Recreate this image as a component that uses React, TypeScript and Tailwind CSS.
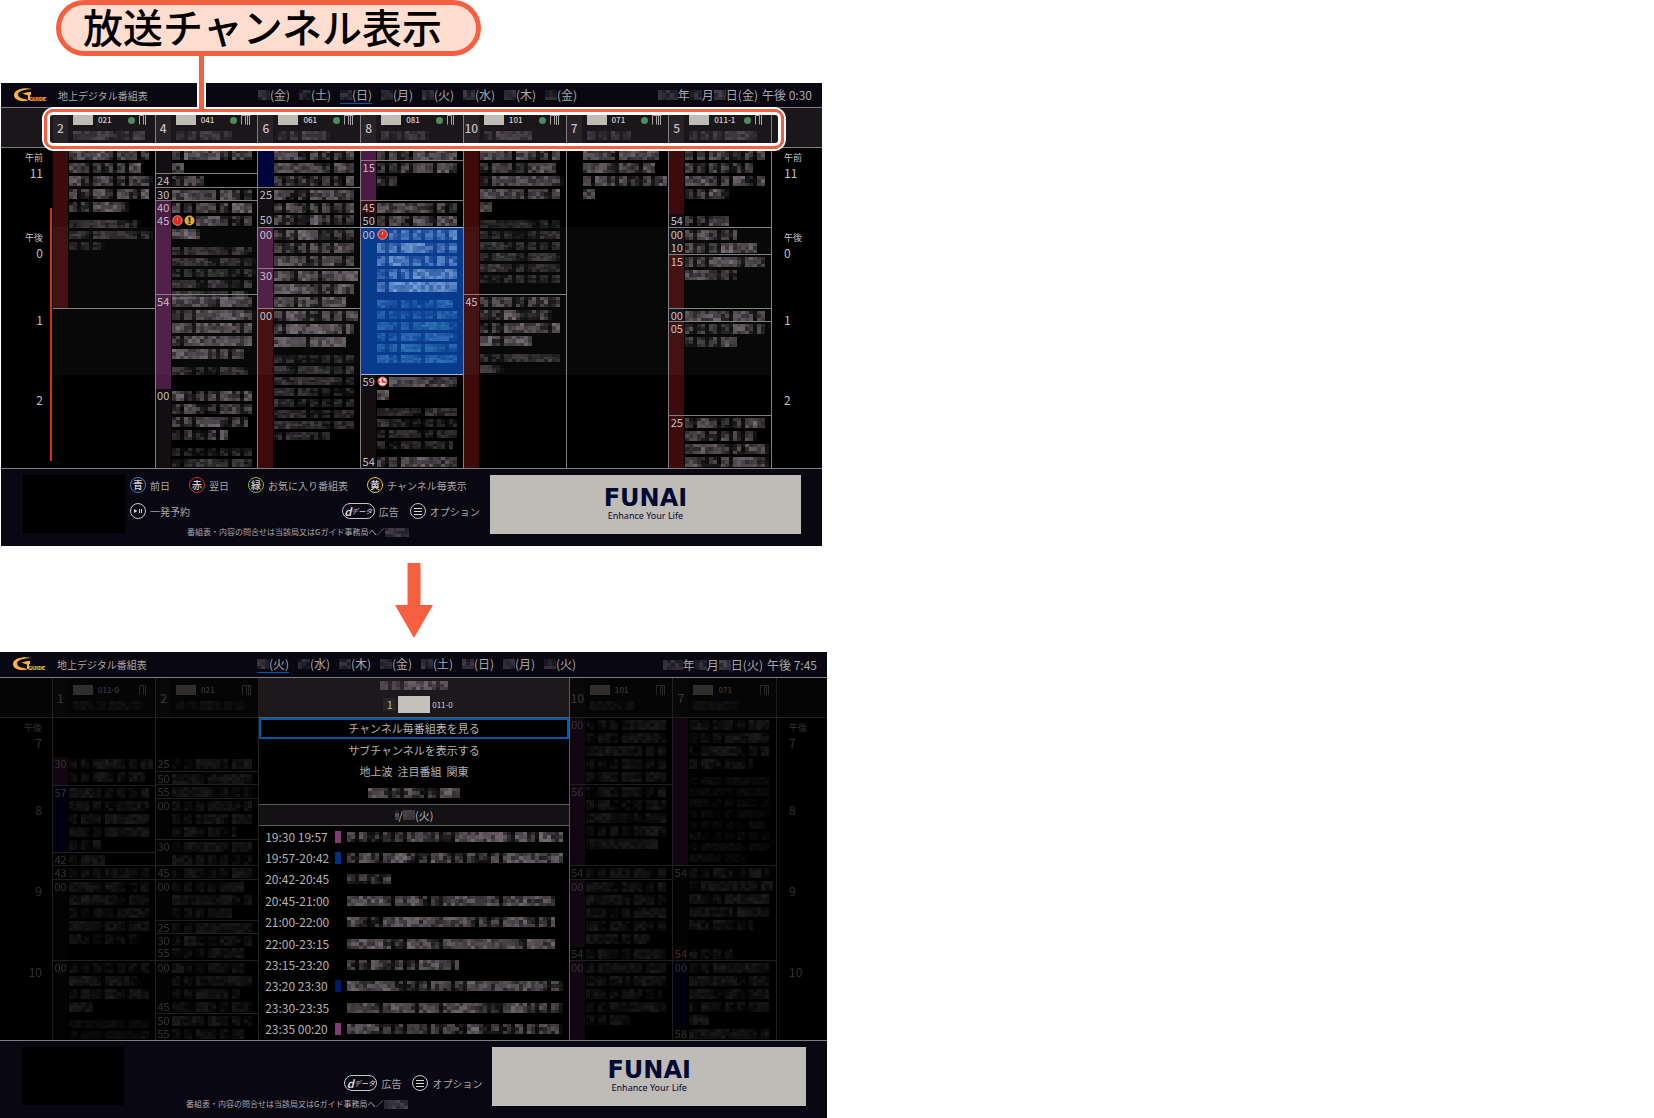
import type { ReactNode } from "react";
import clsx from "clsx";

type Tone = "none" | "dark" | "red" | "purple" | "navy";

interface Program {
  h: number;
  label?: string;
  tone?: Tone;
  line?: boolean;
  title?: number[];
  desc?: number[];
  icons?: ("rec" | "warn" | "clock")[];
  selected?: boolean;
}

interface Channel {
  no: string;
  code: string;
  name: number;
  bars: number;
  programs: Program[];
}

interface TimeMark {
  h: number;
  period?: string;
  hour: string;
}

const toneClass: Record<Tone, string> = {
  none: "",
  dark: "bg-[#120e12]",
  red: "bg-[#3e0b0c]",
  purple: "bg-[#4b1b44]",
  navy: "bg-[#00063a]",
};

// Channels of the weekly guide (heights are in pixels on the time axis)
const mainChannels: Channel[] = [
  {
    no: "2", code: "021", name: 70, bars: 3,
    programs: [
      { h: 160, tone: "red", title: [80, 72, 82, 80, 60], desc: [0, 72, 82, 36] },
      { h: 160, line: true },
    ],
  },
  {
    no: "4", code: "041", name: 56, bars: 4,
    programs: [
      { h: 25, tone: "dark", title: [80, 10] },
      { h: 14, label: "24", tone: "dark", line: true, title: [30] },
      { h: 13, label: "30", tone: "dark", line: true, title: [80] },
      { h: 14, label: "40", tone: "purple", line: true, title: [80] },
      { h: 80, label: "45", tone: "purple", title: [56, 28], desc: [0, 78, 82, 82, 80, 76], icons: ["rec", "warn"] },
      { h: 95, label: "54", tone: "purple", line: true, title: [80, 82, 80, 80, 70], desc: [0, 76] },
      { h: 79, label: "00", tone: "dark", title: [80, 80, 76, 54], desc: [0, 80, 80] },
    ],
  },
  {
    no: "6", code: "061", name: 50, bars: 4,
    programs: [
      { h: 39, tone: "navy", title: [80, 80, 80] },
      { h: 26, label: "25", tone: "dark", line: true, title: [80, 80] },
      { h: 14, label: "50", tone: "dark", title: [80] },
      { h: 41, label: "00", tone: "purple", line: true, title: [80, 80, 80] },
      { h: 40, label: "30", tone: "purple", line: true, title: [82, 80, 70] },
      { h: 160, label: "00", tone: "red", line: true, title: [82, 80, 72], desc: [0, 80, 80, 78, 80, 80, 78, 80, 56] },
    ],
  },
  {
    no: "8", code: "081", name: 46, bars: 3,
    programs: [
      { h: 12, tone: "purple", title: [80] },
      { h: 40, label: "15", tone: "purple", line: true, title: [80, 20] },
      { h: 14, label: "45", tone: "red", line: true, title: [80] },
      { h: 13, label: "50", tone: "dark", title: [80] },
      { h: 148, label: "00", selected: true, title: [66, 80, 80, 78, 80], desc: [0, 76, 80, 80, 80, 80, 78] },
      { h: 80, label: "59", tone: "dark", title: [66, 10], desc: [0, 80, 80, 80, 76], icons: ["clock"] },
      { h: 13, label: "54", tone: "dark", title: [80] },
    ],
  },
  {
    no: "10", code: "101", name: 46, bars: 4,
    programs: [
      { h: 146, tone: "red", title: [80, 76, 82, 80, 10], desc: [0, 80, 80, 80, 80, 80, 78] },
      { h: 174, label: "45", tone: "red", line: true, title: [80, 70, 80, 52], desc: [0, 80, 24] },
    ],
  },
  {
    no: "7", code: "071", name: 44, bars: 4,
    programs: [{ h: 320, title: [76, 72, 82, 12] }],
  },
  {
    no: "5", code: "011-1", name: 68, bars: 3,
    programs: [
      { h: 66, tone: "red", title: [80, 68, 80, 42] },
      { h: 13, label: "54", tone: "dark", title: [42] },
      { h: 14, label: "00", tone: "dark", line: true, title: [52] },
      { h: 13, label: "10", tone: "dark", title: [70] },
      { h: 54, label: "15", tone: "red", line: true, title: [80, 50] },
      { h: 13, label: "00", tone: "dark", line: true, title: [78] },
      { h: 94, label: "05", tone: "red", line: true, title: [78, 52] },
      { h: 53, label: "25", tone: "red", line: true, title: [78, 70, 82, 82] },
    ],
  },
];

const leftChannels: Channel[] = [
  {
    no: "1", code: "011-0", name: 70, bars: 3,
    programs: [
      { h: 39 },
      { h: 28, label: "30", tone: "purple", title: [82, 76] },
      { h: 67, label: "57", tone: "navy", line: true, title: [80, 80, 80, 80, 32] },
      { h: 13, label: "42", tone: "dark", line: true, title: [36] },
      { h: 14, label: "43", tone: "dark", line: true, title: [80] },
      { h: 81, label: "00", tone: "dark", line: true, title: [80, 80, 82, 80, 70] },
      { h: 80, label: "00", tone: "dark", line: true, title: [80, 70, 80, 24], desc: [0, 80, 80] },
    ],
  },
  {
    no: "2", code: "021", name: 68, bars: 4,
    programs: [
      { h: 39 },
      { h: 14, label: "25", tone: "dark", title: [80] },
      { h: 13, label: "50", tone: "dark", line: true, title: [80] },
      { h: 14, label: "55", tone: "dark", line: true, title: [80] },
      { h: 41, label: "00", tone: "dark", line: true, title: [80, 80, 64] },
      { h: 26, label: "30", tone: "dark", line: true, title: [80, 78] },
      { h: 14, label: "45", tone: "dark", line: true, title: [80] },
      { h: 41, label: "00", tone: "dark", line: true, title: [70, 80, 60] },
      { h: 13, label: "25", tone: "dark", line: true, title: [80] },
      { h: 13, label: "30", tone: "dark", line: true, title: [80] },
      { h: 14, label: "55", tone: "dark", title: [70] },
      { h: 40, label: "00", tone: "dark", line: true, title: [72, 80, 68] },
      { h: 13, label: "45", tone: "dark", title: [80] },
      { h: 14, label: "50", tone: "dark", line: true, title: [80] },
      { h: 13, label: "55", tone: "dark", title: [72] },
    ],
  },
];

const rightChannels: Channel[] = [
  {
    no: "10", code: "101", name: 44, bars: 4,
    programs: [
      { h: 66, label: "00", tone: "purple", title: [80, 80, 80, 80, 80] },
      { h: 81, label: "56", tone: "purple", line: true, title: [80, 78, 80, 80, 72] },
      { h: 14, label: "54", tone: "dark", line: true, title: [78] },
      { h: 68, label: "00", tone: "purple", line: true, title: [80, 80, 80, 80, 62] },
      { h: 13, label: "54", tone: "dark", title: [78] },
      { h: 80, label: "00", tone: "purple", line: true, title: [80, 80, 76, 80, 42] },
    ],
  },
  {
    no: "7", code: "071", name: 46, bars: 4,
    programs: [
      { h: 147, tone: "purple", title: [80, 80, 80, 62], desc: [0, 80, 80, 80, 80, 76, 80, 80, 56] },
      { h: 82, label: "54", tone: "dark", line: true, title: [80, 82, 80, 80, 62] },
      { h: 13, label: "54", tone: "red", title: [42] },
      { h: 67, label: "00", tone: "navy", line: true, title: [80, 80, 80, 80, 20] },
      { h: 13, label: "58", tone: "dark", title: [80] },
    ],
  },
];

const mainTimes: TimeMark[] = [
  { h: 80, period: "午前", hour: "11" },
  { h: 84, period: "午後", hour: "0" },
  { h: 80, hour: "1" },
  { h: 76, hour: "2" },
];

const menuTimes: TimeMark[] = [
  { h: 84, period: "午後", hour: "7" },
  { h: 81, hour: "8" },
  { h: 81, hour: "9" },
  { h: 76, hour: "10" },
];

const schedule = [
  { time: "19:30 19:57", color: "bg-[#823b73]", w: 216 },
  { time: "19:57-20:42", color: "bg-[#003083]", w: 216 },
  { time: "20:42-20:45", color: "", w: 44 },
  { time: "20:45-21:00", color: "", w: 208 },
  { time: "21:00-22:00", color: "", w: 208 },
  { time: "22:00-23:15", color: "", w: 208 },
  { time: "23:15-23:20", color: "", w: 112 },
  { time: "23:20 23:30", color: "bg-[#001a6b]", w: 216 },
  { time: "23:30-23:35", color: "", w: 216 },
  { time: "23:35 00:20", color: "bg-[#823b73]", w: 216 },
];

const noise = (n: number) => {
  const x = Math.sin(n * 127.1 + 11.7) * 43758.5453;
  return x - Math.floor(x);
};

// One masked line of text, drawn as a mosaic of small cells
function Mosaic({ w, seed, h = 10, fill = "#8d838b", dim = false }: { w: number; seed: number; h?: number; fill?: string; dim?: boolean }) {
  const cols = Math.max(1, Math.round(w / 4));
  const rows = 3;
  const cells: ReactNode[] = [];
  for (let c = 0; c < cols; c++) {
    const glyph = noise(seed * 31 + Math.floor(c / 3));
    const gap = cols > 4 && c % 3 === 2 && glyph < 0.5;
    for (let r = 0; r < rows; r++) {
      const cell = noise(seed * 97 + c * 13 + r * 7);
      const v = (0.08 + glyph * 0.3 + cell * 0.45) * (gap ? 0.3 : 1) * (dim ? 0.6 : 1);
      cells.push(<rect key={`${c}-${r}`} x={c * 4} y={(r * h) / rows} width={4} height={h / rows} fill={fill} opacity={v.toFixed(2)} />);
    }
  }
  return (
    <svg width={cols * 4} height={h} className="block shrink-0" shapeRendering="crispEdges" aria-hidden="true">
      {cells}
    </svg>
  );
}

function GGuideLogo() {
  return (
    <svg width="35" height="15" viewBox="0 0 35 15" className="block shrink-0" role="img" aria-label="G-Guide">
      <path d="M18 1C10-1 0 1.500 0 7c0 5.500 8 7 14 5.500V7.500L10 6h6v6C9 11.500 4 9.500 4 6.500 4 3 11 1.400 18 1Z" fill="#fbb040" />
      <path d="M8 6c3-1.500 6-2 9-2v3h-3c-2-1-4-1-6-1Z" fill="#fbb040" />
      <text x="15" y="13" fill="#fbb040" fontFamily="Roboto" fontWeight="900" fontSize="6">GUIDE</text>
    </svg>
  );
}

function BarsIcon({ bars }: { bars: number }) {
  return (
    <svg width="10" height="10" viewBox="0 0 10 10" className="block" fill="none" stroke="#a9a4a6" aria-hidden="true">
      <path d="M.5 9.500V.5h4v9" />
      <path d="M6.500 0v10" />
      {bars > 3 && <path d="M8.500 0v10M4.500 .5h5" />}
    </svg>
  );
}

function ProgramIcon({ kind }: { kind: "rec" | "warn" | "clock" }) {
  return (
    <svg width="11" height="11" viewBox="0 0 11 11" className="block shrink-0" aria-hidden="true">
      {kind === "rec" && (
        <>
          <circle cx="5.500" cy="5.500" r="4.800" fill="#e02a1f" stroke="#e8b7b0" strokeWidth=".8" />
          <path d="M5.500 3v2.500" stroke="#fbd0c8" />
        </>
      )}
      {kind === "warn" && (
        <>
          <circle cx="5.500" cy="5.500" r="5" fill="#e3a92c" />
          <path d="M5.500 2v4.500M5.500 7.500v1.500" stroke="#111" strokeWidth="1.800" />
        </>
      )}
      {kind === "clock" && (
        <>
          <circle cx="5.500" cy="5.500" r="4.600" fill="#e6dcd9" stroke="#e0402f" />
          <path d="M5.500 2.500v3.500h3.500M1 6h2" stroke="#e02a1f" strokeWidth="1.500" fill="none" />
        </>
      )}
    </svg>
  );
}

function ProgramCell({ program, seed }: { program: Program; seed: number }) {
  const { h, label, tone = "none", line, title = [], desc = [], icons = [], selected } = program;
  const marks = selected ? (["rec"] as const) : icons;
  return (
    <div
      className={clsx(
        "flex",
        line && "border-t border-[#807d80]",
        selected && "border-y border-[#9fb4d6] bg-[#00358a]"
      )}
      style={{ height: h }}
    >
      <div className={clsx("w-[15px] shrink-0 text-center text-[11px] leading-[13px] text-[#c4bfc0]", toneClass[tone])}>{label}</div>
      <div className="min-w-0 flex-1 pl-px">
        {title.map((w, i) => (
          <div key={i} className="flex h-[13px] items-center gap-px">
            {i === 0 && marks.map((m) => <ProgramIcon key={m} kind={m} />)}
            <Mosaic w={w} seed={seed + i} fill={selected ? "#8fb6e8" : undefined} />
          </div>
        ))}
        {desc.map((w, i) => (
          <div key={i} className={clsx("flex items-center", w === 0 ? "h-[5px]" : "h-[11px]")}>
            {w > 0 && <Mosaic w={w} seed={seed + 20 + i} h={8} dim fill={selected ? "#58b0e8" : undefined} />}
          </div>
        ))}
      </div>
    </div>
  );
}

function ChannelColumn({ channel, index, live = false }: { channel: Channel; index: number; live?: boolean }) {
  return (
    <section className="min-w-0 border-r border-[#807d80]">
      <div className="flex h-10 border-b border-[#807d80] bg-[#1a1619]">
        <div className="flex w-[15px] shrink-0 items-center justify-center bg-[#272327] text-xs font-medium text-[#c4bfc0]">{channel.no}</div>
        <div className="min-w-0 flex-1 pt-[7px] pr-[6px] pl-[5px]">
          <div className="flex h-[10px] items-center">
            <span className="mr-[5px] h-[10px] w-5 shrink-0 bg-[#bfbbb7]" />
            <span className="text-[8px] leading-[10px] font-medium text-[#d5d2d2]">{channel.code}</span>
            <span className="ml-auto flex items-center gap-[4px]">
              {live && <span className="size-[7px] rounded-full bg-[#4c8c5f]" />}
              <BarsIcon bars={channel.bars} />
            </span>
          </div>
          <div className="mt-[6px]">
            <Mosaic w={channel.name} seed={index * 7 + 400} h={9} dim />
          </div>
        </div>
      </div>
      {channel.programs.map((p, i) => (
        <ProgramCell key={i} program={p} seed={index * 1000 + i * 50 + 3} />
      ))}
    </section>
  );
}

function TimeColumn({ times, side, dim = false }: { times: TimeMark[]; side: "left" | "right"; dim?: boolean }) {
  return (
    <div className={clsx("shrink-0", side === "left" ? "w-[52px]" : "w-[50px]", dim && "opacity-25")}>
      <div className="h-10 border-b border-[#807d80] bg-[#1a1619]" />
      <div className={clsx("flex", side === "left" ? "justify-end" : "pl-[12px]")}>
        <div className={side === "left" ? "text-right" : "text-left"}>
          {times.map((t) => (
            <div key={t.hour} className="text-[#c4bfc0]" style={{ height: t.h }}>
              {t.period && <div className="h-[17px] pt-[3px] text-[9px] leading-[13px]">{t.period}</div>}
              <div className="text-xs leading-4">{t.hour}</div>
            </div>
          ))}
        </div>
        {side === "left" && (
          <div className="w-[10px] pt-[60px] pl-[7px]">
            {!dim && <div className="h-[253px] w-[2px] bg-[#da2a20]" />}
          </div>
        )}
      </div>
    </div>
  );
}

function GuideHeader({ days, active, today, clock, className }: { days: string[]; active: number; today: string; clock: string; className: string }) {
  return (
    <header className={clsx("flex items-center border-b border-[#807d80] bg-[#090812] pr-[10px] pl-[13px] text-[#aaa6a8]", className)}>
      <GGuideLogo />
      <h2 className="ml-[9px] w-[200px] text-[10px] whitespace-nowrap">地上デジタル番組表</h2>
      <nav className="flex text-xs leading-4">
        {days.map((d, i) => (
          <div key={i} className="w-[41px]">
            <button type="button" className={clsx("flex items-center border-b", i === active ? "border-[#0059ad]" : "border-transparent")}>
              <Mosaic w={10} seed={i + 900} dim />
              <span>({d})</span>
            </button>
          </div>
        ))}
      </nav>
      <div className="ml-auto flex items-center text-xs whitespace-nowrap">
        <Mosaic w={20} seed={931} dim />
        <span>年</span>
        <Mosaic w={12} seed={942} dim />
        <span>月</span>
        <Mosaic w={12} seed={953} dim />
        <span>日({today})</span>
        <span className="ml-[4px]">午後 {clock}</span>
      </div>
    </header>
  );
}

function KeyButton({ mark, ring, children }: { mark: ReactNode; ring: string; children: ReactNode }) {
  return (
    <button type="button" className="flex items-center gap-1 text-[10px] whitespace-nowrap">
      <span className={clsx("flex size-4 items-center justify-center rounded-full border text-[10px] leading-none font-medium text-[#d8d4d2]", ring)}>{mark}</span>
      {children}
    </button>
  );
}

function GuideFooter({ full = false }: { full?: boolean }) {
  return (
    <footer className="flex h-[78px] border-t border-[#807d80] bg-[#090812] pt-[6px] pr-[21px] pl-[22px] text-[#aaa6a8]">
      <div className="h-[58px] w-[102px] shrink-0 bg-black" />
      <div className="min-w-0 flex-1 pr-[10px] pl-[5px]">
        <div className="flex h-5 items-center gap-[19px]">
          {full && (
            <>
              <KeyButton mark="青" ring="border-[#3b7fb8]">前日</KeyButton>
              <KeyButton mark="赤" ring="border-[#d8282c]">翌日</KeyButton>
              <KeyButton mark="緑" ring="border-[#86b82e]">お気に入り番組表</KeyButton>
              <KeyButton mark="黄" ring="border-[#f2c320]">チャンネル毎表示</KeyButton>
            </>
          )}
        </div>
        <div className="mt-[6px] flex h-5 items-center">
          {full && (
            <KeyButton
              ring="border-[#c9c5c4]"
              mark={
                <svg width="8" height="6" viewBox="0 0 8 6" fill="#d8d4d2" aria-hidden="true">
                  <path d="M0 1l3.500 2L0 5zM5 1h1v4H5zM7 1h1v4H7z" />
                </svg>
              }
            >
              一発予約
            </KeyButton>
          )}
          <button type="button" className="ml-auto flex items-center gap-[4px] text-[10px] whitespace-nowrap">
            <span className="flex h-4 w-[33px] items-center justify-center rounded-full border border-[#c9c5c4] text-[7px] leading-none text-[#d8d4d2] italic">
              <b className="text-[11px]">d</b>データ
            </span>
            広告
          </button>
          <div className="ml-[11px]">
            <KeyButton
              ring="border-[#c9c5c4]"
              mark={
                <svg width="8" height="7" viewBox="0 0 8 7" stroke="#d8d4d2" aria-hidden="true">
                  <path d="M0 .5h8M0 3.500h8M0 6.500h8" />
                </svg>
              }
            >
              オプション
            </KeyButton>
          </div>
        </div>
        <div className="mt-[4px] flex items-center pl-[57px] text-[8px] leading-[14px] whitespace-nowrap">
          番組表・内容の問合せは当該局又はGガイド事務局へ／
          <Mosaic w={22} seed={full ? 77 : 78} h={9} dim />
        </div>
      </div>
      <div className="flex h-[59px] w-[40%] shrink-0 flex-col items-center justify-center bg-[#bfbbb7] text-[#000a33]">
        <div className="font-['DejaVu_Sans'] text-2xl leading-5 font-bold">FUNAI</div>
        <div className="mt-[2px] font-['Noto_Sans'] text-[9px] leading-3">Enhance Your Life</div>
      </div>
    </footer>
  );
}

function ProgramGuide() {
  return (
    <article className="mr-[5px] ml-px bg-black">
      <GuideHeader className="h-[25px]" days={["金", "土", "日", "月", "火", "水", "木", "金"]} active={2} today="金" clock="0:30" />
      <div className="relative flex">
        <TimeColumn times={mainTimes} side="left" />
        <div className="relative grid min-w-0 flex-1 grid-cols-7">
          {mainChannels.map((c, i) => (
            <ChannelColumn key={c.no} channel={c} index={i} live />
          ))}
          {/* Hours around the selected program */}
          <div className="pointer-events-none absolute inset-x-0 top-[119px] h-[148px] bg-white/3" />
        </div>
        <TimeColumn times={mainTimes} side="right" />
        {/* Frame around the channel row */}
        <div className="pointer-events-none absolute -top-px right-[36px] left-[41px] h-[44px] rounded-xl border-2 border-white">
          <div className="h-full rounded-[10px] border-[3px] border-[#f75f41]">
            <div className="h-full rounded-[6px] border-[3px] border-white" />
          </div>
        </div>
      </div>
      <GuideFooter full />
    </article>
  );
}

function ChannelMenu() {
  return (
    <section className="col-span-3 flex flex-col border-r border-[#5c595b] bg-black text-[#b5b1b3]">
      <div className="flex h-10 flex-col items-center border-b border-[#5c595b] bg-[#1c181b] pt-[3px]">
        <Mosaic w={68} seed={611} h={9} />
        <div className="mt-[6px] flex items-center pl-[8px]">
          <span className="mr-[2px] w-[13px] bg-[#272327] text-center text-[11px] leading-[13px]">1</span>
          <span className="h-[17px] w-8 bg-[#c4c1bb]" />
          <span className="ml-[2px] text-[8px] text-[#d5d2d2]">011-0</span>
        </div>
      </div>
      <div className="flex flex-col text-[11px]">
        <button type="button" className="h-[21px] border-2 border-[#005bab] leading-[17px]">チャンネル毎番組表を見る</button>
        <button type="button" className="h-[22px]">サブチャンネルを表示する</button>
        <button type="button" className="h-[21px]">地上波&nbsp; 注目番組&nbsp; 関東</button>
        <button type="button" className="flex h-[22px] items-center justify-center" aria-label="NHK">
          <Mosaic w={92} seed={633} />
        </button>
      </div>
      <div className="flex h-[22px] items-center justify-center border-y border-[#5c595b] bg-[#141114] text-[11px]">
        <Mosaic w={4} seed={642} />/<Mosaic w={10} seed={651} dim />(火)
      </div>
      <table className="h-[214px] w-full table-fixed text-xs leading-4">
        <tbody>
          {schedule.map((s, i) => (
            <tr key={s.time}>
              <td className="w-[76px] p-0 pl-[6px] whitespace-nowrap">{s.time}</td>
              <td className="w-[12px] p-0">
                <div className={clsx("h-3 w-[6px]", s.color)} />
              </td>
              <td className="overflow-hidden p-0">
                <Mosaic w={s.w} seed={700 + i * 9} />
              </td>
            </tr>
          ))}
        </tbody>
      </table>
    </section>
  );
}

function ProgramGuideWithMenu() {
  return (
    <article className="bg-black">
      <GuideHeader className="h-[26px]" days={["火", "水", "木", "金", "土", "日", "月", "火"]} active={0} today="火" clock="7:45" />
      <div className="flex">
        <TimeColumn times={menuTimes} side="left" dim />
        <div className="grid min-w-0 flex-1 grid-cols-7">
          <div className="col-span-2 grid grid-cols-2 border-l border-[#807d80] opacity-25">
            {leftChannels.map((c, i) => (
              <ChannelColumn key={c.no} channel={c} index={i + 10} />
            ))}
          </div>
          <ChannelMenu />
          <div className="col-span-2 grid grid-cols-2 opacity-25">
            {rightChannels.map((c, i) => (
              <ChannelColumn key={c.no} channel={c} index={i + 15} />
            ))}
          </div>
        </div>
        <TimeColumn times={menuTimes} side="right" dim />
      </div>
      <GuideFooter />
    </article>
  );
}

export default function App() {
  return (
    <div className="min-h-screen bg-white font-['Noto_Sans_CJK_JP',sans-serif]">
      <main className="relative w-1/2">
        <h1 className="mb-[27px] ml-[56px] flex h-14 w-[425px] items-center justify-center rounded-full border-[5px] border-[#f75f41] bg-[#ffded0] pr-[12px] pb-[4px] text-[40px] leading-none font-medium whitespace-nowrap text-black">
          放送チャンネル表示
        </h1>
        <ProgramGuide />
        <div className="absolute top-[56px] left-[197px] h-[53px] w-[9px] border-x-2 border-white bg-[#f75f41]" />
        <svg width="38" height="75" viewBox="0 0 38 75" className="mx-auto mt-[17px] mb-[14px] block" fill="#f75f41" aria-hidden="true">
          <path d="M12.500 0h13v42H38L19 75 0 42h12.500z" />
        </svg>
        <ProgramGuideWithMenu />
      </main>
    </div>
  );
}
